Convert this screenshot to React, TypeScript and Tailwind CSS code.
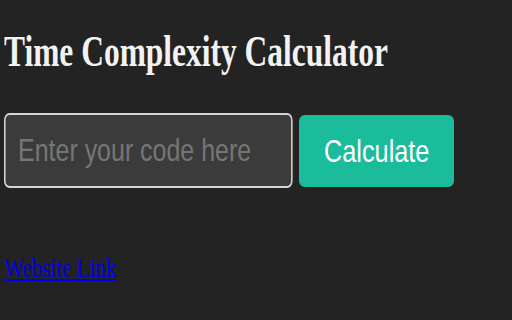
import React, { useState } from "react";

const App = () => {
  const [code, setCode] = useState("");

  return (
    <div className="min-h-screen w-full overflow-hidden bg-[#232323] px-[4px] pt-[26px] font-['Liberation_Serif',serif]">
      <h1 className="inline-block origin-left scale-x-[0.715] whitespace-nowrap text-[44px] font-bold leading-[52px] text-[#f2f2f2]">
        Time Complexity Calculator
      </h1>

      {/* input + button row */}
      <div className="mt-[35px] flex items-center gap-[6px]">
        <div className="h-[75px] w-[289px] shrink-0">
          <input
            type="text"
            placeholder="Enter your code here"
            value={code}
            onChange={(e) => setCode(e.target.value)}
            className="h-[75px] w-[370px] origin-left scale-x-[0.78] rounded-[7px] border-2 border-[#d4d4d4] bg-[#3b3b3b] pl-[16px] pr-[10px] font-['Liberation_Sans',sans-serif] text-[32px] text-white placeholder:text-[#767676] outline-none"
          />
        </div>
        <button className="h-[72px] w-[155px] shrink-0 rounded-[6px] bg-[#1abc9c] font-['Liberation_Sans',sans-serif] text-[32px] text-white">
          <span className="inline-block scale-x-[0.79]">Calculate</span>
        </button>
      </div>

      <div className="mt-[64px] leading-[32px]">
        <a href="#" className="inline-block origin-left scale-x-[0.78] whitespace-nowrap text-[27px] text-[#0000ee] underline">
          Website Link
        </a>
      </div>
    </div>
  );
};

export default App;
